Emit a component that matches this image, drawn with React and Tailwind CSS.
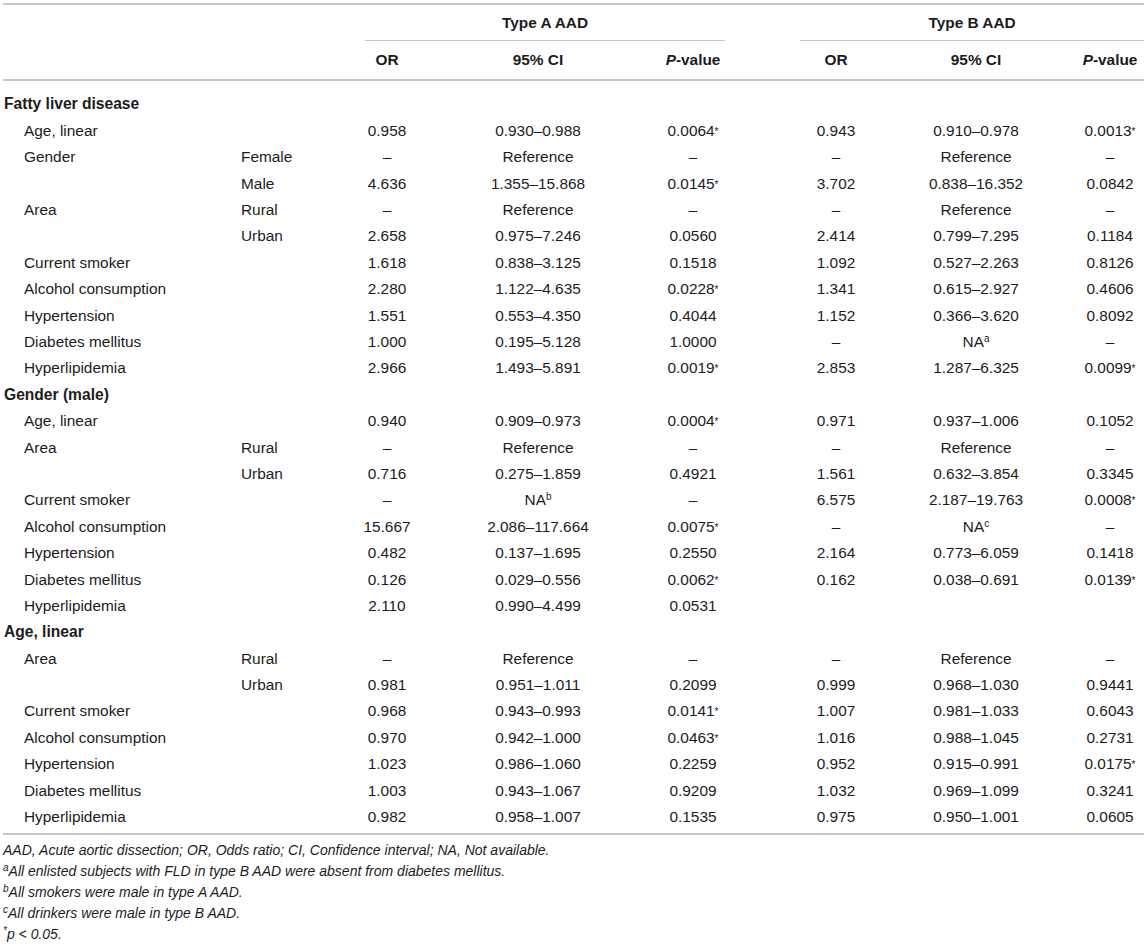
const DASH = '–'

function Sig({ v }) {
  if (!v || !v.endsWith('*')) return v
  return <>{v.slice(0, -1)}<sup className="text-[10px] relative top-[-1px]">*</sup></>
}

function NA({ mark }) {
  return <>NA<sup className="text-[10px]">{mark}</sup></>
}

const sections = [
  {
    title: 'Fatty liver disease',
    rows: [
      ['Age, linear', '', '0.958', '0.930–0.988', '0.0064*', '0.943', '0.910–0.978', '0.0013*'],
      ['Gender', 'Female', DASH, 'Reference', DASH, DASH, 'Reference', DASH],
      ['', 'Male', '4.636', '1.355–15.868', '0.0145*', '3.702', '0.838–16.352', '0.0842'],
      ['Area', 'Rural', DASH, 'Reference', DASH, DASH, 'Reference', DASH],
      ['', 'Urban', '2.658', '0.975–7.246', '0.0560', '2.414', '0.799–7.295', '0.1184'],
      ['Current smoker', '', '1.618', '0.838–3.125', '0.1518', '1.092', '0.527–2.263', '0.8126'],
      ['Alcohol consumption', '', '2.280', '1.122–4.635', '0.0228*', '1.341', '0.615–2.927', '0.4606'],
      ['Hypertension', '', '1.551', '0.553–4.350', '0.4044', '1.152', '0.366–3.620', '0.8092'],
      ['Diabetes mellitus', '', '1.000', '0.195–5.128', '1.0000', DASH, <NA mark="a" />, DASH],
      ['Hyperlipidemia', '', '2.966', '1.493–5.891', '0.0019*', '2.853', '1.287–6.325', '0.0099*'],
    ],
  },
  {
    title: 'Gender (male)',
    rows: [
      ['Age, linear', '', '0.940', '0.909–0.973', '0.0004*', '0.971', '0.937–1.006', '0.1052'],
      ['Area', 'Rural', DASH, 'Reference', DASH, DASH, 'Reference', DASH],
      ['', 'Urban', '0.716', '0.275–1.859', '0.4921', '1.561', '0.632–3.854', '0.3345'],
      ['Current smoker', '', DASH, <NA mark="b" />, DASH, '6.575', '2.187–19.763', '0.0008*'],
      ['Alcohol consumption', '', '15.667', '2.086–117.664', '0.0075*', DASH, <NA mark="c" />, DASH],
      ['Hypertension', '', '0.482', '0.137–1.695', '0.2550', '2.164', '0.773–6.059', '0.1418'],
      ['Diabetes mellitus', '', '0.126', '0.029–0.556', '0.0062*', '0.162', '0.038–0.691', '0.0139*'],
      ['Hyperlipidemia', '', '2.110', '0.990–4.499', '0.0531', '', '', ''],
    ],
  },
  {
    title: 'Age, linear',
    rows: [
      ['Area', 'Rural', DASH, 'Reference', DASH, DASH, 'Reference', DASH],
      ['', 'Urban', '0.981', '0.951–1.011', '0.2099', '0.999', '0.968–1.030', '0.9441'],
      ['Current smoker', '', '0.968', '0.943–0.993', '0.0141*', '1.007', '0.981–1.033', '0.6043'],
      ['Alcohol consumption', '', '0.970', '0.942–1.000', '0.0463*', '1.016', '0.988–1.045', '0.2731'],
      ['Hypertension', '', '1.023', '0.986–1.060', '0.2259', '0.952', '0.915–0.991', '0.0175*'],
      ['Diabetes mellitus', '', '1.003', '0.943–1.067', '0.9209', '1.032', '0.969–1.099', '0.3241'],
      ['Hyperlipidemia', '', '0.982', '0.958–1.007', '0.1535', '0.975', '0.950–1.001', '0.0605'],
    ],
  },
]

const cell = 'h-[26.4px] p-0 text-center whitespace-nowrap'
const head = 'h-[40px] p-0 text-center border-b-2 border-[#c6c6c6]'

export default function App() {
  return (
    <div className="w-[1144px] h-[946px] bg-white pt-[3px] pl-[3px] text-[#1c1c1c] overflow-hidden" style={{ fontFamily: '"Liberation Sans", Arial, sans-serif' }}>
      <table className="w-[1141px] table-fixed border-separate border-spacing-0 border-t-2 border-[#c6c6c6] text-[15.4px] leading-none">
        <colgroup>
          <col className="w-[238px]" />
          <col className="w-[104px]" />
          <col className="w-[84px]" />
          <col className="w-[218px]" />
          <col className="w-[92px]" />
          <col className="w-[57px]" />
          <col className="w-[80px]" />
          <col className="w-[200px]" />
          <col className="w-[68px]" />
        </colgroup>
        <thead className="font-bold">
          <tr>
            <td colSpan={2} className="p-0" />
            <td colSpan={3} className="p-0">
              <div className="h-[36px] ml-[20px] mr-[14px] flex items-center justify-center border-b border-[#c6c6c6]">Type A AAD</div>
            </td>
            <td className="p-0" />
            <td colSpan={3} className="p-0">
              <div className="h-[36px] ml-[4px] flex items-center justify-center border-b border-[#c6c6c6]">Type B AAD</div>
            </td>
          </tr>
          <tr>
            <td colSpan={2} className={head} />
            <td className={head}>OR</td>
            <td className={head}>95% CI</td>
            <td className={head}><i>P</i>-value</td>
            <td className={head} />
            <td className={head}>OR</td>
            <td className={head}>95% CI</td>
            <td className={head}><i>P</i>-value</td>
          </tr>
        </thead>
        <tbody>
          <tr><td colSpan={9} className="h-[10px] p-0" /></tr>
          {sections.map((s, si) => (
            <Section key={si} s={s} />
          ))}
          <tr><td colSpan={9} className="h-[5px] p-0 border-b-2 border-[#c6c6c6]" /></tr>
        </tbody>
      </table>

      <div className="mt-[5px] text-[14px] leading-[21px] italic">
        <p>AAD, Acute aortic dissection; OR, Odds ratio; CI, Confidence interval; NA, Not available.</p>
        <p><sup className="text-[10px]">a</sup>All enlisted subjects with FLD in type B AAD were absent from diabetes mellitus.</p>
        <p><sup className="text-[10px]">b</sup>All smokers were male in type A AAD.</p>
        <p><sup className="text-[10px]">c</sup>All drinkers were male in type B AAD.</p>
        <p><sup className="text-[10px]">*</sup>p &lt; 0.05.</p>
      </div>
    </div>
  )
}

function Section({ s }) {
  return (
    <>
      <tr>
        <td colSpan={9} className="h-[26.4px] p-0 pl-[1px] font-bold text-[15.6px]">{s.title}</td>
      </tr>
      {s.rows.map((r, i) => (
        <tr key={i}>
          <td className="h-[26.4px] p-0 pl-[21px] whitespace-nowrap">{r[0]}</td>
          <td className="h-[26.4px] p-0 whitespace-nowrap">{r[1]}</td>
          <td className={cell}>{r[2]}</td>
          <td className={cell}>{r[3]}</td>
          <td className={cell}><Sig v={r[4]} /></td>
          <td className="p-0" />
          <td className={cell}>{r[5]}</td>
          <td className={cell}>{r[6]}</td>
          <td className={cell}><Sig v={r[7]} /></td>
        </tr>
      ))}
    </>
  )
}
